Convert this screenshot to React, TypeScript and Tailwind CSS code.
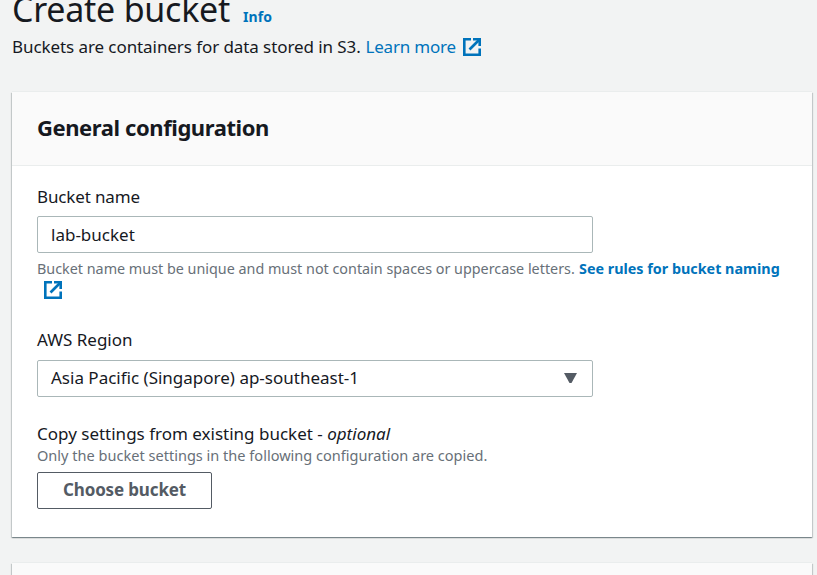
import type { ReactNode } from 'react';

function ExternalIcon({ className = '' }: { className?: string }) {
  return (
    <svg viewBox="0 0 18 18" strokeWidth={2.6} className={`h-[18px] w-[18px] shrink-0 fill-none stroke-[#0073bb] ${className}`}>
      <path d="M8 1.3H1.3v15.4h15.4V10.5" />
      <path d="M10 1.3h6.7V8" />
      <path d="M16.5 1.5L6.5 11.5" />
    </svg>
  );
}

function Label({ children, className = '' }: { children: ReactNode; className?: string }) {
  return <div className={`h-[26px] whitespace-nowrap text-[17px] leading-[26px] ${className}`}>{children}</div>;
}

export default function App() {
  return (
    <div className="flex h-[575px] w-[817px] flex-col overflow-hidden bg-[#f2f3f3] pl-3 font-['Noto_Sans',sans-serif] text-[#16191f]">
      <header className="h-[92px] shrink-0 whitespace-nowrap">
        <div className="-mt-[13px] flex h-[47px] items-baseline">
          <h1 className="w-[231px] text-[34px] leading-[44px] tracking-[-0.25px]">Create bucket</h1>
          <a className="text-[14px] font-bold tracking-[0.1px] text-[#0073bb]">Info</a>
        </div>
        <p className="flex h-[26px] items-center text-[17px] leading-[26px]">
          <span className="w-[353.5px] tracking-[-0.08px]">Buckets are containers for data stored in S3.</span>
          <a className="w-[97.5px] tracking-[-0.2px] text-[#0073bb]">Learn more</a>
          <ExternalIcon />
        </p>
      </header>

      <section className="h-[445px] w-[800px] shrink-0 bg-white shadow-[0_-1px_0_0_#eaeded,0_1px_1px_0_rgba(0,28,36,0.3),1px_1px_1px_0_rgba(0,28,36,0.15),-1px_1px_1px_0_rgba(0,28,36,0.15)]">
        <div className="flex h-[74px] items-center border-b border-[#eaeded] bg-[#fafafa] px-[25px] pb-[3px]">
          <h2 className="text-[22px] font-bold leading-[28px] tracking-[-0.42px]">General configuration</h2>
        </div>
        <div className="px-[25px] pt-[18px]">
          <Label className="tracking-[-0.15px]">Bucket name</Label>
          <div className="mt-[6px] flex h-[37px] w-[556px] items-center rounded-[2px] border border-[#aab7b8] px-[13px] text-[17px]">lab-bucket</div>
          <div className="flex h-[22px] whitespace-nowrap pt-[5px] text-[14.35px] leading-[22px] text-[#687078]">
            <span className="w-[542px]">Bucket name must be unique and must not contain spaces or uppercase letters.</span>
            <a className="font-bold text-[#0073bb]">See rules for bucket naming</a>
          </div>
          <ExternalIcon className="ml-[7px] mt-[6px]" />
          <div className="mt-[28px]"><Label>AWS Region</Label></div>
          <div className="mt-[7px] flex h-[37px] w-[556px] items-center justify-between rounded-[2px] border border-[#aab7b8] pl-[13px] pr-[15px] text-[17px]">
            <span className="pb-[2px]">Asia Pacific (Singapore) ap-southeast-1</span>
            <svg viewBox="0 0 13 10" className="mb-px h-[10px] w-[13px] fill-[#545b64]"><path d="M0 0h13L7.5 10h-2z" /></svg>
          </div>
          <div className="mt-[24px]"><Label>Copy settings from existing bucket - <i>optional</i></Label></div>
          <p className="-mt-[2px] h-[22px] whitespace-nowrap text-[14.55px] leading-[20px] text-[#687078]">Only the bucket settings in the following configuration are copied.</p>
          <button className="mt-[5px] flex h-[37px] w-[175px] items-center justify-center rounded-[2px] border border-[#545b64] pb-[2px] text-[17px] font-bold tracking-[-0.15px] text-[#545b64]">Choose bucket</button>
        </div>
      </section>

      <section className="mt-[26px] h-[30px] w-[800px] shrink-0 bg-[#fafafa] shadow-[0_-1px_0_0_#eaeded,0_1px_1px_0_rgba(0,28,36,0.3),1px_1px_1px_0_rgba(0,28,36,0.15),-1px_1px_1px_0_rgba(0,28,36,0.15)]" />
    </div>
  );
}
